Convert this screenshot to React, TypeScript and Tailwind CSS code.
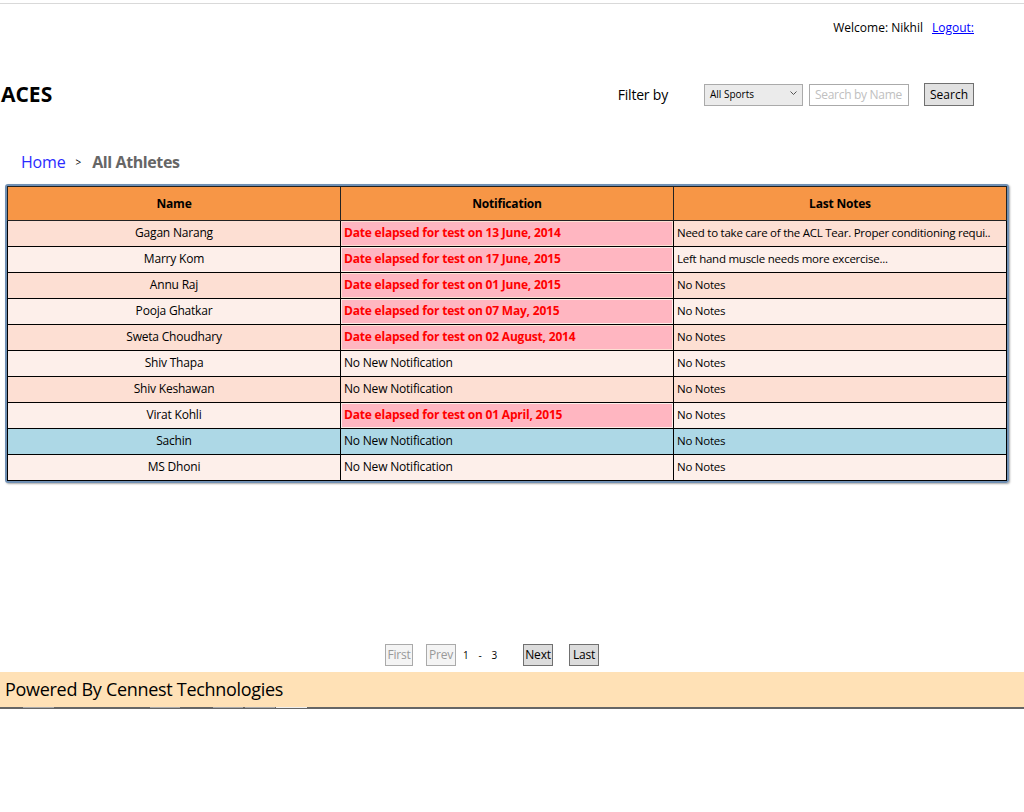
import React from 'react'

type Athlete = {
  name: string
  notification: string | null
  notes: string
  highlight?: boolean
}

const athletes: Athlete[] = [
  { name: 'Gagan Narang', notification: 'Date elapsed for test on 13 June, 2014', notes: 'Need to take care of the ACL Tear. Proper conditioning requi..' },
  { name: 'Marry Kom', notification: 'Date elapsed for test on 17 June, 2015', notes: 'Left hand muscle needs more excercise...' },
  { name: 'Annu Raj', notification: 'Date elapsed for test on 01 June, 2015', notes: 'No Notes' },
  { name: 'Pooja Ghatkar', notification: 'Date elapsed for test on 07 May, 2015', notes: 'No Notes' },
  { name: 'Sweta Choudhary', notification: 'Date elapsed for test on 02 August, 2014', notes: 'No Notes' },
  { name: 'Shiv Thapa', notification: null, notes: 'No Notes' },
  { name: 'Shiv Keshawan', notification: null, notes: 'No Notes' },
  { name: 'Virat Kohli', notification: 'Date elapsed for test on 01 April, 2015', notes: 'No Notes' },
  { name: 'Sachin', notification: null, notes: 'No Notes', highlight: true },
  { name: 'MS Dhoni', notification: null, notes: 'No Notes' },
]

const font = "font-['Segoe_UI','Open_Sans','Noto_Sans',sans-serif]"

function rowBg(i: number, a: Athlete) {
  if (a.highlight) return 'bg-[#add8e6]'
  return i % 2 === 0 ? 'bg-[#fddfd3]' : 'bg-[#fdefea]'
}

export default function App() {
  return (
    <div className={`${font} relative h-[812px] w-[1024px] bg-white text-black`}>
      <div className="h-[4px] border-b border-[#d9d9d9]" />

      <div className="flex justify-end pr-[50px] pt-[15px] text-[12px]">
        <span>Welcome: Nikhil</span>
        <a href="#" className="ml-[9px] text-[#0000ff] underline">Logout:</a>
      </div>

      <div className="mt-[46px] flex items-center">
        <h1 className="ml-px text-[21px] font-bold leading-none">ACES</h1>
        <div className="ml-auto flex items-center pr-[50px]">
          <span className="text-[14px] tracking-[-0.2px]">Filter by</span>
          <div className="ml-[36px] flex h-[22px] w-[99px] items-center justify-between border border-[#aaa] bg-[#ebebeb] pl-[5px] pr-[5px] text-[10px]">
            <span>All Sports</span>
            <svg width="7" height="5" viewBox="0 0 7 5" className="mb-[3px]">
              <path d="M0.5 0.5 L3.5 3.5 L6.5 0.5" fill="none" stroke="#555" strokeWidth="1" />
            </svg>
          </div>
          <div className="ml-[6px] flex h-[22px] w-[100px] items-center overflow-hidden whitespace-nowrap border border-[#aaa] bg-white pl-[5px] text-[12px] tracking-[-0.3px] text-[#c0c0c0]">
            Search by Name
          </div>
          <button className="ml-[15px] h-[23px] w-[50px] border border-[#707070] bg-[#e1e1e1] text-[12px]">Search</button>
        </div>
      </div>

      <div className="mt-[44px] flex items-center pl-[21px]">
        <a href="#" className="text-[16px] tracking-[-0.2px] text-[#2b2bff]">Home</a>
        <span className="ml-[10px] text-[10px]">&gt;</span>
        <span className="ml-[11px] text-[16px] font-bold tracking-[-0.4px] text-[#666]">All Athletes</span>
      </div>

      <div className="ml-[5px] mt-[10px] w-[1004px] rounded-[3px] border-2 border-[#6f8fb3] shadow-[1px_1px_2px_rgba(0,0,0,0.35)]">
        <table className="w-full table-fixed border-collapse text-[12px] tracking-[-0.2px]">
          <thead>
            <tr className="h-[34px] bg-[#f79646]">
              <th className="border border-[#222] font-bold">Name</th>
              <th className="border border-[#222] font-bold">Notification</th>
              <th className="border border-[#222] font-bold">Last Notes</th>
            </tr>
          </thead>
          <tbody>
            {athletes.map((a, i) => (
              <tr key={a.name} className={`h-[26px] ${rowBg(i, a)}`}>
                <td className="border border-black pb-[2px] text-center">{a.name}</td>
                <td className="border border-black p-0">
                  {a.notification ? (
                    <div className="m-px flex h-[23px] items-center bg-[#ffb6c1] pb-[2px] pl-[2px] font-bold text-[#ff0000]">
                      {a.notification}
                    </div>
                  ) : (
                    <div className="pb-[2px] pl-[3px]">No New Notification</div>
                  )}
                </td>
                <td className="overflow-hidden whitespace-nowrap border border-black pb-[2px] pl-[3px] text-[11.5px] tracking-[-0.25px]">
                  {a.notes}
                </td>
              </tr>
            ))}
          </tbody>
        </table>
      </div>

      <div className="mt-[161px] flex items-center justify-center pr-[40px] text-[12px] tracking-[-0.2px]">
        <button className="h-[22px] w-[28px] border border-[#aaa] bg-[#f4f4f4] text-[#999]">First</button>
        <button className="ml-[13px] h-[22px] w-[30px] border border-[#aaa] bg-[#f4f4f4] text-[#999]">Prev</button>
        <span className="ml-[7px] text-[10px]">1</span>
        <span className="ml-[10px] text-[10px]">-</span>
        <span className="ml-[10px] text-[10px]">3</span>
        <button className="ml-[26px] h-[22px] w-[30px] border border-[#707070] bg-[#dcdcdc]">Next</button>
        <button className="ml-[16px] h-[22px] w-[30px] border border-[#707070] bg-[#dcdcdc]">Last</button>
      </div>

      <div className="mt-[6px] flex h-[35px] items-center bg-[#ffe1b6] pl-[5px] text-[18px] tracking-[-0.3px]">
        Powered By Cennest Technologies
      </div>
      <div className="flex h-[2px] bg-[#666]">
        <div className="ml-[23px] h-px w-[31px] bg-[#aaa]" />
        <div className="ml-[96px] h-px w-[30px] bg-[#aaa]" />
        <div className="ml-[33px] h-px w-[30px] bg-[#aaa]" />
        <div className="ml-[2px] h-px w-[30px] bg-[#aaa]" />
        <div className="ml-[1px] h-px w-[31px] bg-[#eee]" />
      </div>
    </div>
  )
}
